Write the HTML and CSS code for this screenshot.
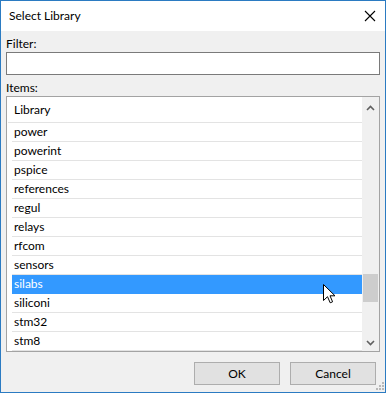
FILE: index.html
```html
<!DOCTYPE html>
<html>
<head>
<meta charset="utf-8">
<link rel="stylesheet" href="styles.css">
</head>
<body>
<div class="window">
  <div class="titlebar">
    <span class="title">Select Library</span>
    <svg class="close" width="12" height="12" viewBox="0 0 12 12"><path d="M1 1L11 11M11 1L1 11" stroke="#000" stroke-width="1.1" fill="none"/></svg>
  </div>
  <div class="client">
    <div class="lbl">Filter:</div>
    <div class="input"></div>
    <div class="lbl items-lbl">Items:</div>
    <div class="listbox">
      <div class="list">
        <div class="header">Library</div>
        <div class="row">power</div>
        <div class="row">powerint</div>
        <div class="row">pspice</div>
        <div class="row">references</div>
        <div class="row">regul</div>
        <div class="row">relays</div>
        <div class="row">rfcom</div>
        <div class="row">sensors</div>
        <div class="row selected">silabs</div>
        <div class="row">siliconi</div>
        <div class="row">stm32</div>
        <div class="row">stm8</div>
      </div>
      <div class="scrollbar">
        <div class="sb-btn sb-up"><svg width="9" height="6" viewBox="0 0 9 6"><path d="M1 5L4.5 1.5L8 5" stroke="#606060" stroke-width="1.6" fill="none"/></svg></div>
        <div class="sb-track">
          <div class="sb-thumb"></div>
        </div>
        <div class="sb-btn"><svg width="9" height="6" viewBox="0 0 9 6"><path d="M1 1L4.5 4.5L8 1" stroke="#606060" stroke-width="1.6" fill="none"/></svg></div>
      </div>
    </div>
    <div class="buttons">
      <div class="btn">OK</div>
      <div class="btn">Cancel</div>
    </div>
  </div>
  <svg class="cursor" width="13" height="20" viewBox="0 0 13 20"><path d="M0.5 0.5L0.5 16.5L4.5 12.7L7.2 18.8L9.6 17.8L7 11.8L12 11.8Z" fill="#fff" stroke="#000" stroke-width="1" stroke-linejoin="miter"/></svg>
  <div class="grip">
    <span class="dot d1"></span><span class="dot d2"></span><span class="dot d3"></span>
    <span class="dot d4"></span><span class="dot d5"></span><span class="dot d6"></span>
  </div>
</div>
</body>
</html>
```
FILE: styles.css
```css
* { box-sizing: border-box; }
html, body { margin: 0; padding: 0; background: #fff; }
body {
  font-family: Lato, "Noto Sans", sans-serif;
  font-size: 12px;
  color: #000;
}
.window {
  position: relative;
  width: 386px;
  height: 393px;
  border: 1px solid #2b7bc2;
  display: flex;
  flex-direction: column;
  background: #f0f0f0;
}
.titlebar {
  height: 30px;
  background: #fff;
  display: flex;
  align-items: center;
  justify-content: space-between;
  padding: 0 9px 0 8px;
  flex: none;
}
.title { line-height: 16px; }
.close { display: block; margin-top: -1px; }
.client {
  flex: 1;
  padding: 5px 5px 0 5px;
  display: flex;
  flex-direction: column;
}
.lbl { line-height: 16px; height: 16px; }
.input {
  height: 23px;
  background: #fff;
  border: 1px solid #7a7a7a;
}
.items-lbl { margin-top: 5px; }
.listbox {
  height: 256px;
  border: 1px solid #a3a3a3;
  background: #fff;
  display: flex;
  overflow: hidden;
}
.list {
  flex: 1;
  overflow: hidden;
}
.header {
  height: 26px;
  line-height: 25px;
  margin-left: 1px;
  padding-left: 6px;
  border-bottom: 1px solid #e3e3e3;
}
.row {
  height: 19px;
  line-height: 18px;
  margin-left: 5px;
  padding-left: 2px;
  border-bottom: 1px solid #e3e3e3;
}
.row.selected {
  background: #3399ff;
  color: #fff;
  border-bottom-color: #3399ff;
}
.scrollbar {
  width: 17px;
  background: #f0f0f0;
  display: flex;
  flex-direction: column;
}
.sb-btn {
  height: 17px;
  display: flex;
  align-items: center;
  justify-content: center;
  flex: none;
}
.sb-up { height: 21px; }
.sb-btn svg { display: block; }
.sb-track { flex: 1; position: relative; }
.sb-thumb {
  position: absolute;
  left: 1px;
  right: 1px;
  top: 156px;
  height: 28px;
  background: #cdcdcd;
}
.buttons {
  margin-top: 10px;
  display: flex;
  justify-content: flex-end;
  gap: 10px;
  padding-right: 4px;
}
.btn {
  width: 86px;
  height: 23px;
  background: #e1e1e1;
  border: 1px solid #adadad;
  text-align: center;
  line-height: 21px;
}
.cursor {
  position: absolute;
  left: 322px;
  top: 283px;
}
.grip {
  position: absolute;
  right: 1px;
  bottom: 1px;
  width: 9px;
  height: 9px;
}
.dot {
  position: absolute;
  width: 2px;
  height: 2px;
  background: #b8b8b8;
}
.d1 { right: 0; top: 0; }
.d2 { right: 3px; top: 3px; }
.d3 { right: 0; top: 3px; }
.d4 { right: 6px; top: 6px; }
.d5 { right: 3px; top: 6px; }
.d6 { right: 0; top: 6px; }
```
